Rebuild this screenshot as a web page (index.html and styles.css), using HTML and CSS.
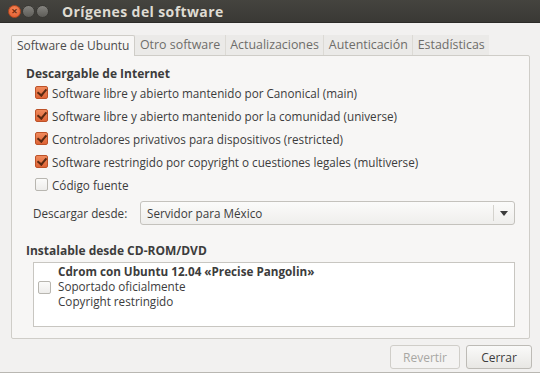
FILE: index.html
```html
<!DOCTYPE html>
<html lang="es">
<head>
    <meta charset="UTF-8">
    <title>Orígenes del software</title>
    <link rel="stylesheet" href="styles.css">
</head>
<body>
    <div class="window">
        <div class="titlebar">
            <div class="controls">
                <span class="wbtn close">×</span>
                <span class="wbtn min"></span>
                <span class="wbtn max"></span>
            </div>
            <span class="title">Orígenes del software</span>
        </div>

        <div class="content">
            <div class="tabs">
                <div class="tab active">Software de Ubuntu</div>
                <div class="tab">Otro software</div>
                <div class="tab">Actualizaciones</div>
                <div class="tab">Autenticación</div>
                <div class="tab last">Estadísticas</div>
            </div>

            <div class="panel">
                <h2 class="section">Descargable de Internet</h2>
                <ul class="checks">
                    <li><span class="box on"></span>Software libre y abierto mantenido por Canonical (main)</li>
                    <li><span class="box on"></span>Software libre y abierto mantenido por la comunidad (universe)</li>
                    <li><span class="box on"></span>Controladores privativos para dispositivos (restricted)</li>
                    <li><span class="box on"></span>Software restringido por copyright o cuestiones legales (multiverse)</li>
                    <li><span class="box"></span>Código fuente</li>
                </ul>

                <div class="download">
                    <span class="label">Descargar desde:</span>
                    <div class="combo">
                        <span class="combo-text">Servidor para México</span>
                        <span class="combo-arrow"></span>
                    </div>
                </div>

                <h2 class="section cd">Instalable desde CD-ROM/DVD</h2>
                <div class="cdlist">
                    <span class="box"></span>
                    <div class="cdinfo">
                        <strong>Cdrom con Ubuntu 12.04 «Precise Pangolin»</strong>
                        <span>Soportado oficialmente</span>
                        <span>Copyright restringido</span>
                    </div>
                </div>
            </div>

            <div class="actions">
                <button class="btn" disabled>Revertir</button>
                <button class="btn">Cerrar</button>
            </div>
        </div>
    </div>
</body>
</html>
```

FILE: styles.css
```css
body {
    margin: 0;
    font-family: "Open Sans", "DejaVu Sans", sans-serif;
    font-size: 11.7px;
    color: #3c3c3c;
    background: #f2f1f0;
}

.window {
    width: 540px;
    height: 373px;
    overflow: hidden;
    background: #f2f1f0;
    border-bottom: 1px solid #b9b7b2;
    box-sizing: border-box;
}

.titlebar {
    height: 23px;
    display: flex;
    align-items: center;
    background: linear-gradient(#45443f, #3a3935);
    border-bottom: 1px solid #2c2b28;
    box-sizing: border-box;
}

.controls {
    display: flex;
    gap: 1px;
    padding-left: 8px;
    width: 49px;
}

.wbtn {
    width: 13px;
    height: 13px;
    border-radius: 50%;
    box-sizing: border-box;
    background: linear-gradient(#85847f, #5d5c58);
    border: 1px solid #3a3935;
    font-size: 11px;
    line-height: 10px;
    text-align: center;
    color: #6b2a10;
    font-weight: bold;
}

.wbtn.close {
    background: radial-gradient(circle at 50% 35%, #f6895a, #e0562a);
    border-color: #b44a20;
}

.title {
    color: #dfdbd2;
    font-weight: bold;
    font-size: 14px;
    letter-spacing: 0.4px;
    padding-left: 5px;
}

.content {
    padding: 12px 10px 0 11px;
}

.tabs {
    display: flex;
    height: 20px;
    align-items: stretch;
    font-size: 12.4px;
}

.tab {
    padding: 0 4.5px;
    line-height: 20px;
    white-space: nowrap;
    flex: none;
    color: #6e6d6a;
    background: #ebeae8;
    border-right: 1px solid #dcdad5;
}

.tab.last {
    border-right: none;
}

.tab.active {
    background: #f7f6f5;
    color: #4c4c4c;
    border: 1px solid #cfcdc8;
    border-bottom: none;
    border-radius: 2px 2px 0 0;
    margin-bottom: -1px;
    line-height: 20px;
    padding: 0 5px;
    font-size: 12px;
}

.panel {
    height: 284px;
    background: #f7f6f5;
    border: 1px solid #cfcdc8;
    border-radius: 0 2px 2px 2px;
    padding: 10px 14px 0 14px;
    box-sizing: border-box;
}

.section {
    margin: 0;
    font-size: 12px;
    font-weight: bold;
    color: #3c3c3c;
    line-height: 16px;
}

.checks {
    list-style: none;
    margin: -1px 0 0 9px;
    padding: 0;
}

.checks li {
    display: flex;
    align-items: center;
    height: 23px;
}

.box {
    width: 13px;
    height: 13px;
    box-sizing: border-box;
    border: 1px solid #b8b6b0;
    border-radius: 2px;
    background: linear-gradient(#fbfbfa, #eeedeb);
    margin-right: 4px;
    flex: none;
    position: relative;
}

.box.on {
    background: linear-gradient(#f08a5c, #de6436);
    border-color: #bd5228;
}

.box.on::after {
    content: "";
    position: absolute;
    left: 3px;
    top: 0px;
    width: 4px;
    height: 7px;
    border: solid #5a2a12;
    border-width: 0 2px 2px 0;
    transform: rotate(40deg);
}

.download {
    display: flex;
    align-items: center;
    margin: 5px 0 0 7px;
}

.label {
    width: 107px;
}

.combo {
    flex: 1;
    height: 24px;
    display: flex;
    align-items: center;
    justify-content: space-between;
    border: 1px solid #c4c2bd;
    border-radius: 3px;
    background: linear-gradient(#fbfbfa, #efeeec);
    box-sizing: border-box;
}

.combo-text {
    padding-left: 6px;
}

.combo-arrow {
    width: 20px;
    height: 16px;
    border-left: 1px solid #d4d2cd;
    position: relative;
}

.combo-arrow::after {
    content: "";
    position: absolute;
    left: 6px;
    top: 6px;
    border-left: 4px solid transparent;
    border-right: 4px solid transparent;
    border-top: 5px solid #3c3c3c;
}

.section.cd {
    margin-top: 18px;
}

.cdlist {
    margin: 3px 0 0 7px;
    height: 65px;
    background: #ffffff;
    border: 1px solid #c8c6c1;
    box-sizing: border-box;
    display: flex;
    align-items: center;
    padding-left: 4px;
}

.cdlist .box {
    margin-right: 7px;
    margin-top: -14px;
}

.cdinfo {
    display: flex;
    flex-direction: column;
    align-self: flex-start;
    padding-top: 1px;
    line-height: 15px;
}

.actions {
    display: flex;
    justify-content: flex-end;
    gap: 6px;
    padding-top: 6px;
    margin-right: -2px;
}

.btn {
    font-family: inherit;
    font-size: 12px;
    color: #3c3c3c;
    height: 24px;
    width: 66px;
    border: 1px solid #bdbbb6;
    border-radius: 3px;
    background: linear-gradient(#fafaf9, #e8e7e4);
}

.btn:disabled {
    color: #a8a7a3;
    border-color: #d0cec9;
    background: #f4f3f2;
    width: 70px;
}
```
